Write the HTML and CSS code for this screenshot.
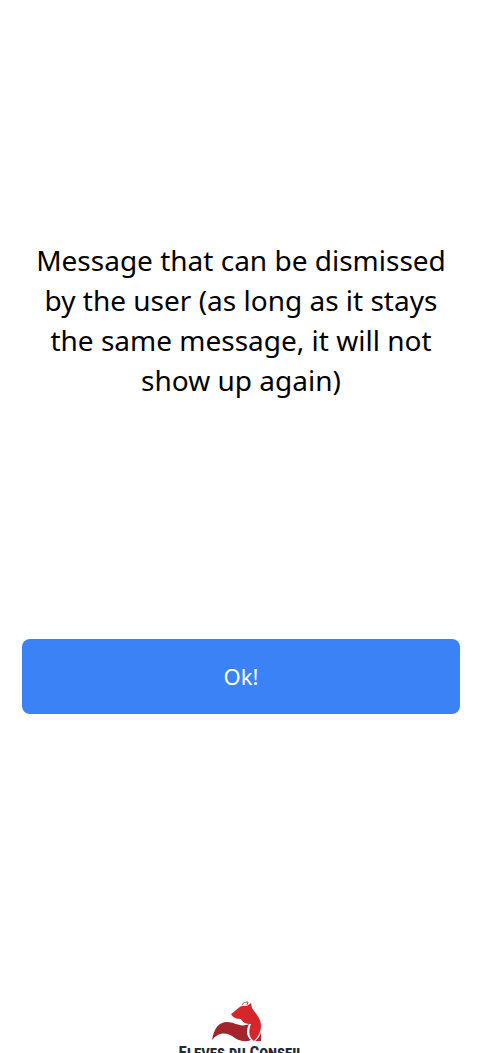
FILE: index.html
```html
<!DOCTYPE html>
<html lang="en">
<head>
<meta charset="utf-8">
<meta name="viewport" content="width=device-width, initial-scale=1">
<title>Message</title>
<link rel="stylesheet" href="styles.css">
</head>
<body>
<main class="screen">
  <div class="message">
    <p class="message-text">Message that can be dismissed by the user (as long as it stays the same message, it will not show up again)</p>
  </div>
  <button class="dismiss" type="button">Ok!</button>
  <footer class="brand">
    <svg class="brand-fox" viewBox="0 0 60 42" aria-hidden="true">
      <path fill="#a3252c" d="M1 39C3 27 8 21 16 21C24 21 29 27 38 23C35 29 35 35 40 39C33 42 26 39 21 35C13 30 6 33 1 39Z"/>
      <path fill="#d5262b" d="M20 13C24 11 27 6 31 5L36 5L40 2L41 7C43 11 50 16 50 25C50 32 46 37 43 40C38 37 37 31 40 23C35 23 31 21 30 18C26 18 22 17 20 13Z"/>
      <path fill="none" stroke="#c7454a" d="M31 4C32 2 34 1 37 1L36 4"/>
      <path fill="#b5262c" d="M44 40C47 38 49 35 50 31L50 40Z"/>
    </svg>
    <span class="brand-name">Eleves du Conseil</span>
  </footer>
</main>
</body>
</html>
```
FILE: styles.css
```css
* {
  box-sizing: border-box;
}

body {
  margin: 0;
  background: #fff;
  color: #000;
  font-family: "Segoe UI", "Noto Sans", "Open Sans", sans-serif;
}

.screen {
  display: grid;
  grid-template-rows: 64fr auto 34fr;
  height: 100vh;
  padding: 0 21px 0 22px;
}

.message {
  display: flex;
  align-items: center;
  justify-content: center;
  padding-top: 2px;
}

.message-text {
  margin: 0;
  font-size: 28px;
  line-height: 40px;
  text-align: center;
}

.dismiss {
  height: 75px;
  border: 0;
  border-radius: 8px;
  background: #3b82f6;
  color: #fff;
  font: inherit;
  font-size: 22px;
}

.brand {
  display: flex;
  flex-direction: column;
  align-items: center;
  justify-content: flex-end;
  overflow: hidden;
}

.brand-fox {
  flex: none;
  width: 60px;
  height: 42px;
}

.brand-name {
  height: 10px;
  color: #252b33;
  font-family: "Roboto Condensed", "Liberation Sans Narrow", "Roboto", sans-serif;
  font-size: 17px;
  font-weight: 700;
  font-variant: small-caps;
  line-height: 18px;
  white-space: nowrap;
}
```
